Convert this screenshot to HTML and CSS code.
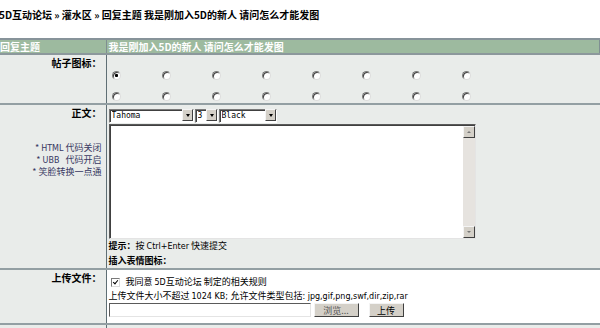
FILE: index.html
```html
<!DOCTYPE html>
<html lang="zh-CN">
<head>
  <meta charset="UTF-8" />
  <title>回复主题 - 5D互动论坛</title>
  <link rel="stylesheet" href="styles.css">
</head>
<body>
  <div class="crumb">5D互动论坛 » 灌水区 » 回复主题 我是刚加入5D的新人 请问怎么才能发图</div>

  <form class="reply">
    <table class="form-table">
      <colgroup>
        <col class="col-label">
        <col>
      </colgroup>
      <tr>
        <th class="th-left">回复主题</th>
        <th>我是刚加入5D的新人 请问怎么才能发图</th>
      </tr>
      <tr>
        <td class="label">帖子图标：</td>
        <td class="field">
          <div class="icons">
            <input type="radio" name="icon" class="ico" checked>
            <input type="radio" name="icon" class="ico">
            <input type="radio" name="icon" class="ico">
            <input type="radio" name="icon" class="ico">
            <input type="radio" name="icon" class="ico">
            <input type="radio" name="icon" class="ico">
            <input type="radio" name="icon" class="ico">
            <input type="radio" name="icon" class="ico">
            <input type="radio" name="icon" class="ico">
            <input type="radio" name="icon" class="ico">
            <input type="radio" name="icon" class="ico">
            <input type="radio" name="icon" class="ico">
            <input type="radio" name="icon" class="ico">
            <input type="radio" name="icon" class="ico">
            <input type="radio" name="icon" class="ico">
            <input type="radio" name="icon" class="ico">
          </div>
        </td>
      </tr>
      <tr>
        <td class="label">
          正文：
          <div class="notes">
            <div>* <span class="lat">HTML</span> 代码关闭</div>
            <div>* <span class="lat">UBB</span>&nbsp;&nbsp;&nbsp;代码开启</div>
            <div>* 笑脸转换一点通</div>
          </div>
        </td>
        <td class="field body-field">
          <div class="toolbar">
            <span class="sel sel-font"><select><option>Tahoma</option></select></span>
            <span class="sel sel-size"><select><option>3</option></select></span>
            <span class="sel sel-color"><select><option>Black</option></select></span>
          </div>
          <div class="editor">
            <textarea class="content"></textarea>
            <div class="vscroll">
              <span class="sb-btn sb-up"></span>
              <span class="sb-track"></span>
              <span class="sb-btn sb-down"></span>
            </div>
          </div>
          <div class="tip"><b>提示：</b>按 <span class="lat">Ctrl+Enter</span> 快速提交</div>
          <div class="smilies"><b>插入表情图标：</b></div>
        </td>
      </tr>
      <tr>
        <td class="label">上传文件：</td>
        <td class="field upload">
          <label class="agree"><input type="checkbox" class="chk" checked><span>我同意 <span class="lat">5D</span>互动论坛 制定的相关规则</span></label>
          <div class="limit">上传文件大小不超过 <span class="lat">1024 KB; </span>允许文件类型包括<span class="lat">: jpg,gif,png,swf,dir,zip,rar</span></div>
          <div class="file-row">
            <input type="text" class="file-path">
            <button type="button" class="btn btn-browse">浏览...</button>
            <button type="button" class="btn btn-up">上传</button>
          </div>
        </td>
      </tr>
      <tr class="last">
        <td class="label"></td>
        <td class="field"></td>
      </tr>
    </table>
  </form>
</body>
</html>
```

FILE: styles.css
```css
body {
  margin: 0;
  background: #fff;
  color: #000;
  font-family: "Noto Sans CJK SC", "DejaVu Sans", sans-serif;
  font-size: 9px;
  overflow: hidden;
}

.lat {
  font-family: "DejaVu Sans", sans-serif;
  font-size: 8px;
}

.crumb {
  height: 38px;
  box-sizing: border-box;
  padding-top: 9px;
  margin-left: -1px;
  font-size: 10px;
  font-weight: bold;
  line-height: 12px;
  white-space: nowrap;
}

.form-table {
  width: 100%;
  border-collapse: collapse;
  table-layout: fixed;
  border-top: 2px solid #87939a;
}

.col-label {
  width: 106px;
}

.form-table th {
  height: 13px;
  padding: 0 0 0 2px;
  background: #9dba9f;
  color: #fff;
  font-size: 10px;
  font-weight: bold;
  text-align: left;
  line-height: 13px;
  border-bottom: 2px solid #8c989c;
  border-right: 1px solid #7f8f92;
  white-space: nowrap;
  overflow: hidden;
}

.form-table th.th-left {
  padding-left: 0;
}

.form-table td {
  vertical-align: top;
  background: #e9ecea;
  border-bottom: 2px solid #939fa3;
  padding: 0;
}

td.label {
  text-align: right;
  padding: 1px 4px 0 0;
  font-weight: bold;
  font-size: 10px;
  line-height: 13px;
  border-right: 1px solid #5f6f75;
}

td.field {
  padding-left: 2px;
}

/* иконки */
.icons {
  display: grid;
  grid-template-columns: repeat(8, 50px);
  row-gap: 12px;
  padding: 16px 0 2px 3px;
}

.ico {
  appearance: none;
  width: 9px;
  height: 9px;
  margin: 0;
  border-radius: 50%;
  background: #fff;
  border: 1px solid;
  border-color: #7a7a7a #dcdcdc #dcdcdc #7a7a7a;
  box-shadow: inset 1px 1px 0 #404040;
}

.ico:checked {
  background: radial-gradient(circle, #000 0 1.3px, #fff 1.8px);
}

/* текст */
.notes {
  margin-top: 23px;
  font-weight: normal;
  font-size: 9px;
  line-height: 11px;
  color: #383862;
}

.toolbar {
  display: flex;
  gap: 1px;
  padding-top: 3px;
  height: 14px;
}

.sel {
  position: relative;
  display: block;
  height: 14px;
}

.sel select {
  appearance: none;
  width: 100%;
  height: 14px;
  margin: 0;
  padding: 0 0 0 2px;
  border: 1px solid;
  border-color: #7a7a7a #fff #fff #7a7a7a;
  background: #fff;
  font-family: "DejaVu Sans Mono", monospace;
  font-size: 8px;
  line-height: 12px;
  color: #000;
  box-shadow: inset 1px 1px 0 #404040;
}

.sel::before {
  content: "";
  position: absolute;
  right: 1px;
  top: 1px;
  width: 11px;
  height: 12px;
  box-sizing: border-box;
  background: #d4d0c8;
  border: 1px solid;
  border-color: #f4f4f4 #404040 #404040 #f4f4f4;
}

.sel::after {
  content: "";
  position: absolute;
  right: 4px;
  top: 6px;
  border-left: 2.5px solid transparent;
  border-right: 2.5px solid transparent;
  border-top: 3px solid #000;
}

.sel-font {
  width: 85px;
}

.sel-size {
  width: 23px;
}

.sel-color {
  width: 58px;
}

.editor {
  display: flex;
  box-sizing: border-box;
  width: 367px;
  height: 115px;
  margin-top: 2px;
  background: #fff;
  border: 1px solid;
  border-color: #5a5a5a #e4e4e4 #e4e4e4 #5a5a5a;
  box-shadow: inset 1px 1px 0 #404040;
}

.content {
  flex: 1;
  margin: 1px 0 0 1px;
  padding: 0;
  border: none;
  resize: none;
  background: transparent;
  outline: none;
}

.vscroll {
  display: flex;
  flex-direction: column;
  width: 12px;
  margin-top: 1px;
  background: #e6e3df;
}

.sb-track {
  flex: 1;
}

.sb-btn {
  position: relative;
  display: block;
  box-sizing: border-box;
  height: 12px;
  background: #d4d0c8;
  border: 1px solid;
  border-color: #f4f4f4 #404040 #404040 #f4f4f4;
}

.sb-btn::after {
  content: "";
  position: absolute;
  left: 3px;
  top: 4px;
  border-left: 2.5px solid transparent;
  border-right: 2.5px solid transparent;
}

.sb-up::after {
  border-bottom: 2.5px solid #777;
}

.sb-down::after {
  border-top: 2.5px solid #777;
}

.tip {
  line-height: 13px;
}

.smilies {
  line-height: 15px;
}

/* загрузка */
.form-table td.upload {
  background: #fff;
  padding-top: 5px;
  padding-bottom: 6px;
}

.agree {
  display: flex;
  align-items: center;
  gap: 6px;
  padding-left: 2px;
  line-height: 13px;
}

.chk {
  appearance: none;
  position: relative;
  width: 9px;
  height: 9px;
  margin: 0;
  background: #fff;
  border: 1px solid;
  border-color: #7a7a7a #dcdcdc #dcdcdc #7a7a7a;
}

.chk:checked::after {
  content: "";
  position: absolute;
  left: 2px;
  top: 0;
  width: 2px;
  height: 4px;
  border: solid #000;
  border-width: 0 1.5px 1.5px 0;
  transform: rotate(40deg);
}

.limit {
  line-height: 13px;
}

.file-row {
  display: flex;
  height: 14px;
}

.file-path {
  box-sizing: border-box;
  width: 202px;
  height: 14px;
  margin: 0;
  padding: 0;
  background: #fff;
  border: 1px solid;
  border-color: #5a5a5a #e4e4e4 #e4e4e4 #5a5a5a;
}

.btn {
  box-sizing: border-box;
  height: 14px;
  margin: 0;
  padding: 0;
  background: #d4d0c8;
  border: 1px solid;
  border-color: #f4f4f4 #404040 #404040 #f4f4f4;
  font-family: "Noto Sans CJK SC", sans-serif;
  font-size: 9px;
  line-height: 11px;
  color: #000;
}

.btn-browse {
  width: 45px;
  margin-left: 3px;
  color: #555;
}

.btn-up {
  width: 35px;
  margin-left: 10px;
}

.last td {
  height: 6px;
  border-bottom: none;
}
```
